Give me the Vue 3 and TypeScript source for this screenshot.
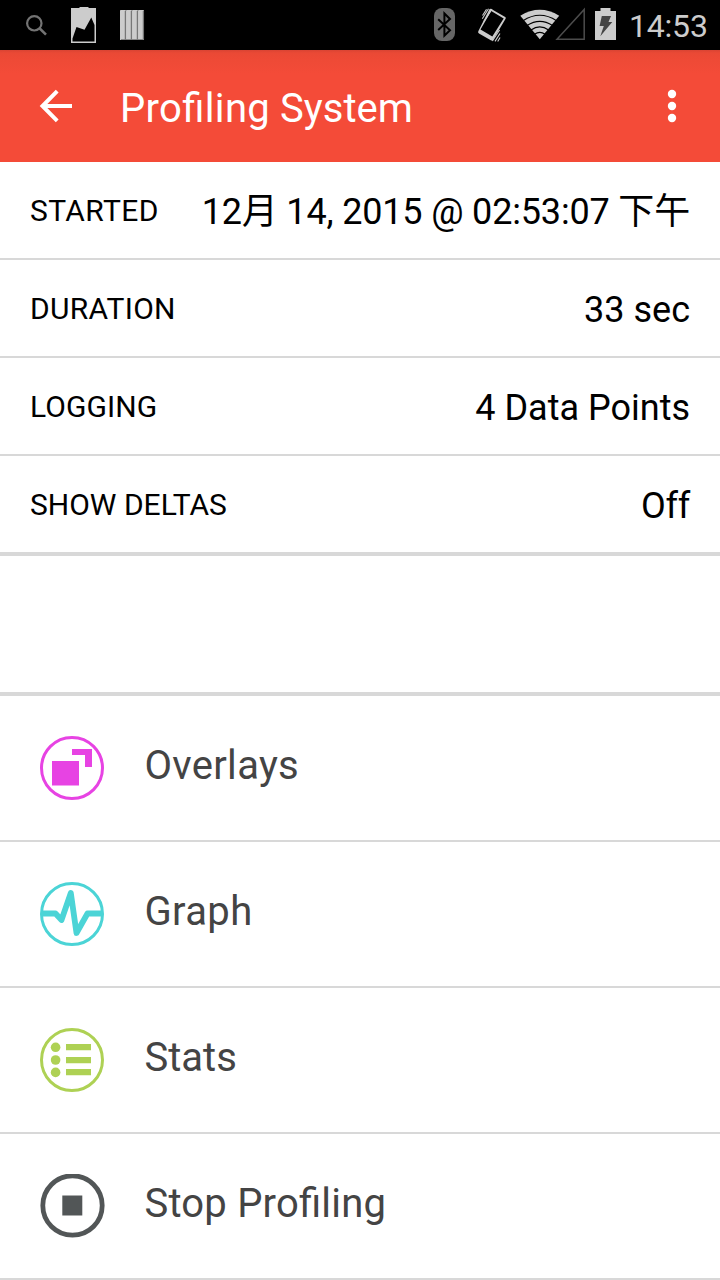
<script setup lang="ts">
interface Detail {
  label: string
  value: string
  labelTracking: number
  valueTracking: number
}
interface MenuItem {
  id: 'overlays' | 'graph' | 'stats' | 'stop'
  label: string
  tracking: number
}

const details: Detail[] = [
  { label: 'STARTED', value: '12月 14, 2015 @ 02:53:07 下午', labelTracking: 0.38, valueTracking: -0.17 },
  { label: 'DURATION', value: '33 sec', labelTracking: 0.3, valueTracking: 0 },
  { label: 'LOGGING', value: '4 Data Points', labelTracking: 0.08, valueTracking: 0 },
  { label: 'SHOW DELTAS', value: 'Off', labelTracking: 0, valueTracking: -0.3 },
]

const menu: MenuItem[] = [
  { id: 'overlays', label: 'Overlays', tracking: 0.3 },
  { id: 'graph', label: 'Graph', tracking: 0.35 },
  { id: 'stats', label: 'Stats', tracking: 0 },
  { id: 'stop', label: 'Stop Profiling', tracking: 0.2 },
]

const spacing = (px: number) => ({ letterSpacing: px ? `${px}px` : 'normal' })
</script>

<template>
  <div class="screen">
    <div class="status">
      <svg class="notifications" width="160" height="50" viewBox="0 0 160 50">
        <g fill="none" stroke="#737373" stroke-width="2.2">
          <circle cx="34.3" cy="23.3" r="7.2" />
          <path d="M39.5 28.3L46 34.6" stroke-width="2.6" />
        </g>
        <path d="M71 8h8.500v-1h9v1H96v35H71z" fill="#ccc" />
        <path d="M72.500 41.500V38.500L76.500 27L84.500 29.800L91.300 17.500L94.500 25V41.500z" fill="#000" />
        <g fill="#ccc">
          <rect v-for="n in 4" :key="n" :x="114 + n * 6" y="10" width="5.900" height="30" rx="0.600" />
        </g>
        <path d="M125.400 11v28.500M131.400 11v28.500M137.400 11v28.500M143.400 11v28.500" stroke="#777" stroke-width="1.300" />
        <path d="M121 39.500h22.500" stroke="#777" stroke-width="0.800" />
      </svg>
      <div class="system">
        <svg width="192" height="50" viewBox="430 0 192 50">
          <rect x="434" y="8" width="21" height="33" rx="8" fill="#666" />
          <path d="M438.200 19.300L450 30.200L444.400 35.600V13.500L450 19L438.200 30" fill="none" stroke="#000" stroke-width="2" />
          <path fill="#ccc" fill-rule="evenodd" d="M489.400 9.200Q490.300 8.600 491.300 9.100L505.200 17Q506.200 17.700 505.600 18.700L493.100 39.700Q492.300 41 490.800 40.300L479 33.600Q477.600 32.700 478.300 31.300zM491.200 11L480.500 29.600L492.300 36.500L503.700 18.500z" />
          <path d="M482.300 18.800L488.500 8.800M483.800 21.600L492 9M482.500 15.500L486.500 9.200M492.400 41L499.600 30M495 41.400L500 33.500M497.700 41.500L500.100 37.500" stroke="#ccc" stroke-width="1.100" />
          <path fill="#ccc" d="M520.300 15.700Q539.800 4 559.200 15.700L539.800 39.300z" />
          <g fill="none" stroke="#000" stroke-width="1.200">
            <path d="M523 20.700Q539.800 9.800 556.600 20.700" />
            <path d="M527 25.600Q539.800 17 552.600 25.600" />
            <path d="M531 30Q539.800 23.800 548.600 30" />
            <path d="M534.500 34.200Q539.800 30.500 545.100 34.200" />
          </g>
          <path d="M557 39.200L584.200 9.500V39.200z" fill="none" stroke="#4c4c4c" stroke-width="1.500" />
          <path d="M595 11h5.500V8h10v3H616v29h-21z" fill="#ccc" />
          <path d="M601.800 16H611L608.500 22H612.300L600.300 36.300L603.800 26H599.600z" fill="#444" />
        </svg>
        <span class="clock">14:53</span>
      </div>
    </div>

    <header class="bar">
      <svg class="back" width="34" height="34" viewBox="0 0 34 34">
        <path d="M33 17H4M18.200 2.200L3.500 17L18.200 31.800" fill="none" stroke="#fff" stroke-width="4" />
      </svg>
      <h1><span class="tracked">Profiling</span> System</h1>
      <svg class="more" width="10" height="34" viewBox="0 0 10 34" fill="#fff">
        <circle cx="5" cy="5" r="4.200" />
        <circle cx="5" cy="17" r="4.200" />
        <circle cx="5" cy="29" r="4.200" />
      </svg>
    </header>

    <section class="details">
      <div v-for="d in details" :key="d.label" class="detail">
        <span class="label" :style="spacing(d.labelTracking)">{{ d.label }}</span>
        <span class="value" :style="spacing(d.valueTracking)">{{ d.value }}</span>
      </div>
    </section>

    <nav class="menu">
      <div v-for="item in menu" :key="item.id" class="item">
        <svg v-if="item.id === 'overlays'" width="66" height="66" viewBox="0 0 66 66">
          <circle cx="32" cy="32" r="30.500" fill="none" stroke="#e743e3" stroke-width="3" />
          <path d="M12 25h27v24.500H12zM32 13h20v18h-7V19H32z" fill="#e743e3" />
        </svg>
        <svg v-else-if="item.id === 'graph'" width="66" height="66" viewBox="0 0 66 66" fill="none" stroke="#4bd4d6">
          <circle cx="32" cy="32" r="30.500" stroke-width="3" />
          <path d="M2 31.500H15.500L21.500 38L30.800 11L36.500 51L47.500 31.500H62" stroke-width="5.800" stroke-linejoin="round" />
        </svg>
        <svg v-else-if="item.id === 'stats'" width="66" height="66" viewBox="0 0 66 66" fill="#aed154">
          <circle cx="32" cy="32" r="30.500" fill="none" stroke="#aed154" stroke-width="3" />
          <circle cx="15.600" cy="19.300" r="4.800" />
          <circle cx="15.600" cy="32" r="4.800" />
          <circle cx="15.600" cy="44.400" r="4.800" />
          <path d="M26 16h25v6.300H26zM26 29h25v6.200H26zM26 41h25v6.300H26z" />
        </svg>
        <svg v-else width="66" height="66" viewBox="0 0 66 66">
          <circle cx="32.500" cy="31.500" r="29.700" fill="none" stroke="#525657" stroke-width="4.800" />
          <path d="M22.300 21.500h20v20h-20z" fill="#525657" />
        </svg>
        <span class="name" :style="spacing(item.tracking)">{{ item.label }}</span>
      </div>
    </nav>
  </div>
</template>

<style>
html,
body {
  margin: 0;
  background: #fff;
}
</style>

<style scoped>
.screen {
  width: 720px;
  height: 1280px;
  overflow: hidden;
  background: #fff;
  color: #000;
  font-family: Roboto, "Noto Sans CJK SC", sans-serif;
  font-feature-settings: "liga" 1;
}
svg {
  display: block;
  flex: none;
}
.status {
  display: flex;
  justify-content: space-between;
  height: 50px;
  background: #000;
}
.system {
  display: flex;
  width: 290px;
}
.clock {
  margin-left: 7px;
  color: #ccc;
  font-size: 32px;
  line-height: 52px;
  letter-spacing: -0.2px;
  white-space: nowrap;
}
.bar {
  display: flex;
  align-items: center;
  box-sizing: border-box;
  height: 112px;
  padding: 0 43px 0 39px;
  background: linear-gradient(#d94433 0, #ea4935 3px, #ee4a36 10px, #f44b38 24px);
}
h1 {
  flex: 1;
  margin: 6px 0 0 47px;
  color: #fff;
  font-size: 40px;
  font-weight: 400;
  line-height: 48px;
}
.tracked {
  letter-spacing: 0.35px;
}
.detail {
  display: flex;
  align-items: center;
  justify-content: space-between;
  height: 96px;
  padding: 0 30px;
  border-bottom: 2px solid #d8d8d8;
  white-space: nowrap;
}
.detail:last-child {
  border-bottom-width: 4px;
}
.label {
  margin-top: 2px;
  font-size: 30px;
  line-height: 36px;
}
.value {
  margin-top: 3px;
  font-size: 36px;
  line-height: 44px;
}
.menu {
  margin-top: 136px;
  border-top: 4px solid #d8d8d8;
}
.item {
  display: flex;
  align-items: center;
  height: 144px;
  padding-left: 40px;
  border-bottom: 2px solid #d8d8d8;
}
.item svg {
  margin-top: 2px;
}
.name {
  margin: -5px 0 0 38.5px;
  color: #444;
  font-size: 40px;
  line-height: 48px;
}
</style>
